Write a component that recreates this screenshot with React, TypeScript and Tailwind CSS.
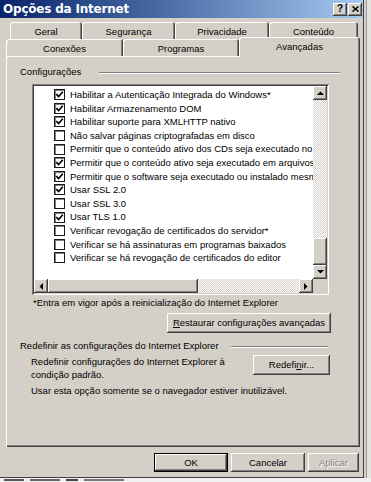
import React from "react";

const RAISED =
  "shadow-[inset_-1px_-1px_0_#404040,inset_1px_1px_0_#ffffff,inset_-2px_-2px_0_#808080,inset_2px_2px_0_#d4d0c8]";
const SUNKEN =
  "shadow-[inset_1px_1px_0_#808080,inset_-1px_-1px_0_#ffffff,inset_2px_2px_0_#404040,inset_-2px_-2px_0_#d4d0c8]";
const DITHER =
  "bg-[conic-gradient(#ffffff_25%,#d4d0c8_0_50%,#ffffff_0_75%,#d4d0c8_0)] bg-[length:2px_2px]";
const TAB =
  "flex justify-center rounded-t-[3px] shadow-[inset_1px_1px_0_#ffffff,inset_-1px_0_0_#404040,inset_-2px_0_0_#808080]";

const items: [boolean, string][] = [
  [true, "Habilitar a Autenticação Integrada do Windows*"],
  [true, "Habilitar Armazenamento DOM"],
  [true, "Habilitar suporte para XMLHTTP nativo"],
  [false, "Não salvar páginas criptografadas em disco"],
  [false, "Permitir que o conteúdo ativo dos CDs seja executado no computador"],
  [true, "Permitir que o conteúdo ativo seja executado em arquivos do computador"],
  [true, "Permitir que o software seja executado ou instalado mesmo que a assinatura seja inválida"],
  [true, "Usar SSL 2.0"],
  [false, "Usar SSL 3.0"],
  [true, "Usar TLS 1.0"],
  [false, "Verificar revogação de certificados do servidor*"],
  [false, "Verificar se há assinaturas em programas baixados"],
  [false, "Verificar se há revogação de certificados do editor"],
];

function Check({ checked }: { checked: boolean }) {
  return (
    <span className="w-[11px] h-[11px] shrink-0 bg-white border border-[#1a1a1a] shadow-[inset_1px_1px_0_#808080] flex items-center justify-center">
      {checked && (
        <svg width="9" height="9" viewBox="0 0 9 9">
          <path d="M1.3 4.2 L3.6 6.6 L7.8 1.8" stroke="#000" strokeWidth="1.7" fill="none" />
        </svg>
      )}
    </span>
  );
}

function Arrow({ dir }: { dir: "up" | "down" | "left" | "right" }) {
  const pts =
    dir === "up"
      ? "0,4 3.5,0.5 7,4"
      : dir === "down"
      ? "0,0 7,0 3.5,3.5"
      : dir === "left"
      ? "4,0 4,7 0.5,3.5"
      : "0,0 0,7 3.5,3.5";
  const w = dir === "up" || dir === "down" ? 7 : 4;
  const h = dir === "up" || dir === "down" ? 4 : 7;
  return (
    <div className={`w-[14px] h-[14px] shrink-0 bg-[#d4d0c8] ${RAISED} flex items-center justify-center`}>
      <svg width={w} height={h} viewBox={`0 0 ${w} ${h}`}>
        <polygon points={pts} fill="#000" />
      </svg>
    </div>
  );
}

function Button({
  children,
  className = "",
  isDefault = false,
}: {
  children: React.ReactNode;
  className?: string;
  isDefault?: boolean;
}) {
  return (
    <div
      className={`flex items-center justify-center bg-[#d4d0c8] ${
        isDefault
          ? "border border-black shadow-[inset_-1px_-1px_0_#404040,inset_1px_1px_0_#ffffff,inset_-2px_-2px_0_#808080]"
          : RAISED
      } ${className}`}
    >
      {children}
    </div>
  );
}

function Etched({ className = "" }: { className?: string }) {
  return <div className={`h-px bg-[#808080] shadow-[0_1px_0_#ffffff] ${className}`} />;
}

function Dialog() {
  return (
    <div className="w-[364px] h-full flex flex-col bg-[#d4d0c8] shadow-[inset_-1px_-1px_0_#404040]">
      {/* title bar */}
      <div className="w-[363px] h-[18px] shrink-0 bg-linear-to-r from-[#0a246a] to-[#a6caf0] flex items-center justify-between pl-[3px] pr-[1px]">
        <span className="text-white font-bold text-[12px] leading-none font-['DejaVu_Sans',sans-serif] tracking-[-0.2px]">
          Opções da Internet
        </span>
        <div className="flex gap-[1px]">
          <div className={`w-[14px] h-[13px] bg-[#d4d0c8] ${RAISED} flex items-center justify-center`}>
            <span className="text-[10px] font-bold leading-none">?</span>
          </div>
          <div className={`w-[14px] h-[13px] bg-[#d4d0c8] ${RAISED} flex items-center justify-center`}>
            <svg width="7" height="6" viewBox="0 0 7 6">
              <path d="M0.5 0.5 L6.5 5.5 M6.5 0.5 L0.5 5.5" stroke="#000" strokeWidth="1.5" />
            </svg>
          </div>
        </div>
      </div>

      {/* tabs */}
      <div className="mt-[4px] flex h-[17px] pl-[10px]">
        <div className={`${TAB} w-[72px] pt-[5px]`}>Geral</div>
        <div className={`${TAB} w-[93px] pt-[5px]`}>Segurança</div>
        <div className={`${TAB} w-[94px] pt-[5px]`}>Privacidade</div>
        <div className={`${TAB} w-[89px] pt-[5px]`}>Conteúdo</div>
      </div>
      <div className="flex h-[17px] pl-[6px]">
        <div className={`${TAB} w-[117px] pt-[5px]`}>Conexões</div>
        <div className={`${TAB} w-[116px] pt-[5px]`}>Programas</div>
        <div className={`${TAB} relative z-10 -mt-[2px] h-[20px] w-[121px] pt-[5px] bg-[#d4d0c8]`}>
          Avançadas
        </div>
      </div>

      {/* panel */}
      <div className="mx-[6px] w-[354px] h-[391px] shrink-0 shadow-[inset_1px_1px_0_#ffffff,inset_-1px_-1px_0_#404040,inset_-2px_-2px_0_#808080] flex flex-col pt-[10px] pl-[14px]">
        <div className="flex items-center h-[12px] pr-[20px]">
          <span>Configurações</span>
          <Etched className="flex-1 ml-[18px]" />
        </div>

        {/* listbox */}
        <div className={`ml-[12px] mt-[6px] w-[297px] h-[211px] bg-white ${SUNKEN} p-[2px] flex flex-col`}>
          <div className="flex flex-1 min-h-0">
            <div className="flex-1 overflow-hidden pt-[2px]">
              {items.map(([c, t], i) => (
                <div key={i} className="h-[13.6px] flex items-center pl-[20px] gap-[5px] whitespace-nowrap">
                  <Check checked={c} />
                  <span>{t}</span>
                </div>
              ))}
            </div>
            <div className="w-[14px] flex flex-col">
              <Arrow dir="up" />
              <div className={`flex-1 ${DITHER}`} />
              <div className={`h-[27px] bg-[#d4d0c8] ${RAISED}`} />
              <Arrow dir="down" />
            </div>
          </div>
          <div className="flex h-[14px]">
            <Arrow dir="left" />
            <div className={`w-[150px] bg-[#d4d0c8] ${RAISED}`} />
            <div className={`flex-1 ${DITHER}`} />
            <Arrow dir="right" />
            <div className="w-[14px] bg-[#d4d0c8]" />
          </div>
        </div>

        <div className="ml-[13px] mt-[2px] h-[12px] flex items-center">
          *Entra em vigor após a reinicialização do Internet Explorer
        </div>

        <Button className="self-end mr-[29px] mt-[4px] w-[164px] h-[20px]">
          <span>
            <span className="underline">R</span>estaurar configurações avançadas
          </span>
        </Button>

        <div className="mt-[7px] flex items-center h-[12px] pr-[32px]">
          <span>Redefinir as configurações do Internet Explorer</span>
          <Etched className="flex-1 ml-[12px]" />
        </div>

        <div className="mt-[3px] flex items-start">
          <div className="ml-[11px] leading-[13px]">
            Redefinir configurações do Internet Explorer à
            <br />
            condição padrão.
          </div>
          <Button className="ml-auto mr-[30px] w-[77px] h-[20px]">
            <span>
              Redefi<span className="underline">n</span>ir...
            </span>
          </Button>
        </div>

        <div className="mt-[4px] ml-[11px] h-[12px] flex items-center">
          Usar esta opção somente se o navegador estiver inutilizável.
        </div>
      </div>

      {/* bottom buttons */}
      <div className="mt-[6px] flex justify-end gap-[3px] pr-[5px]">
        <Button isDefault className="w-[74px] h-[19px]">OK</Button>
        <Button className="w-[74px] h-[19px]">Cancelar</Button>
        <Button className="w-[51px] h-[19px]">
          <span className="text-[#808080] [text-shadow:1px_1px_0_#ffffff]">Aplicar</span>
        </Button>
      </div>
    </div>
  );
}

export default function App() {
  return (
    <div className="w-[371px] h-[482px] overflow-hidden bg-[#d4d0c8] font-['Liberation_Sans',Arial,sans-serif] text-[9.5px] leading-none text-black flex flex-col">
      <div className="flex h-[478px] shrink-0">
        <Dialog />
        <div className="flex-1 flex">
          <div className="w-[2px]" />
          <div className="w-px bg-[#9a9a9a]" />
          <div className="flex-1 bg-[#e4e2dc]" />
        </div>
      </div>
      <div className="flex-1 bg-[#f0f0f0] flex items-center gap-[6px] pl-[4px]">
        <div className="w-[20px] h-[2px] bg-[#555]" />
        <div className="w-[30px] h-[2px] bg-[#666]" />
        <div className="w-[12px] h-[2px] bg-[#444]" />
        <div className="w-[40px] h-[2px] bg-[#777]" />
      </div>
    </div>
  );
}
